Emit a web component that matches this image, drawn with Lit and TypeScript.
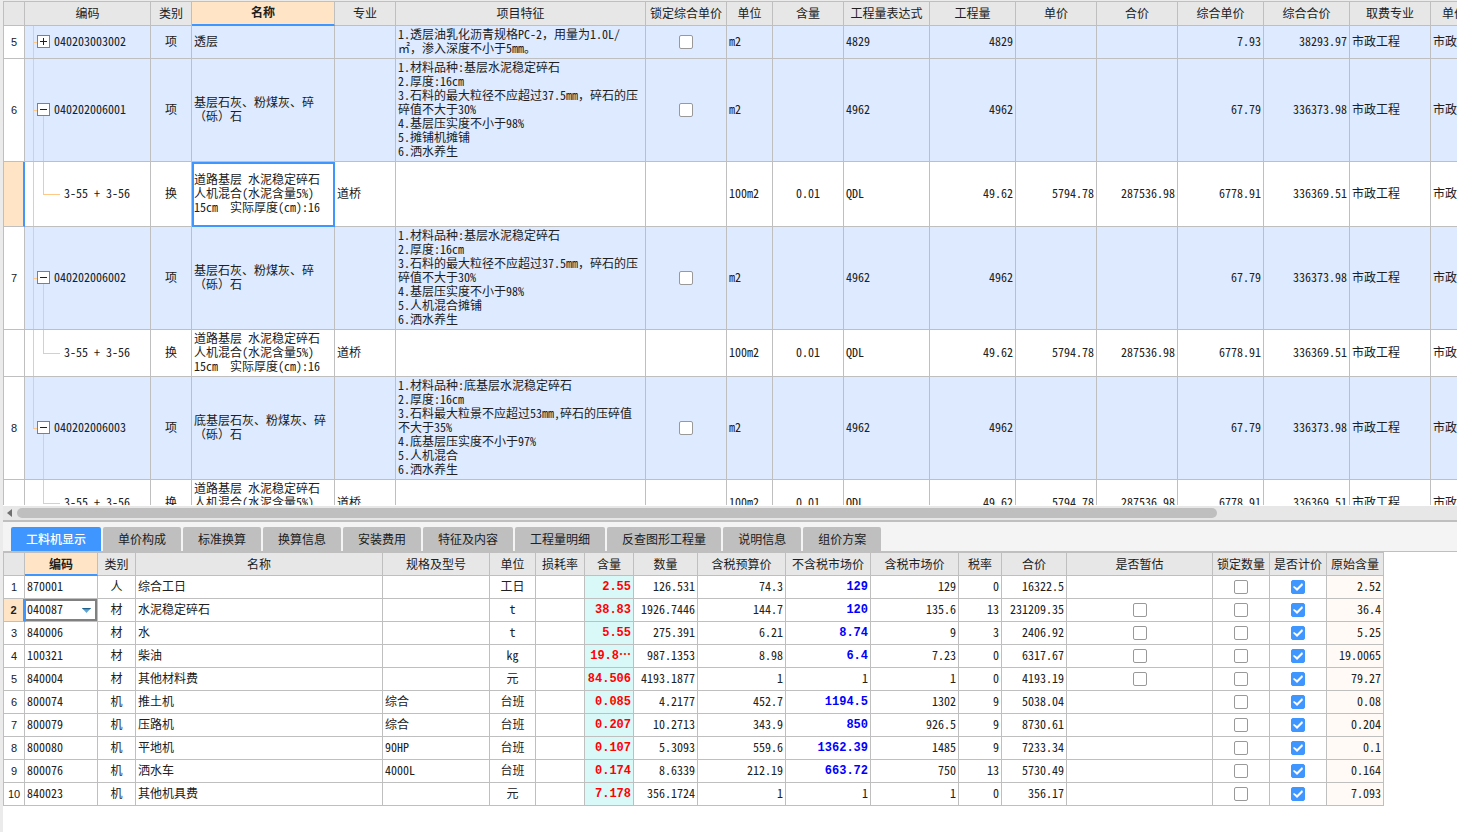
import { LitElement, html, css, nothing } from "lit";
import { customElement, state } from "lit/decorators.js";
import { classMap } from "lit/directives/class-map.js";

interface Column {
  title: string;
  width: number;
  align?: "left" | "right" | "center";
  tone?: "amount" | "price" | "origin";
}

interface BillRow {
  no: string;
  code: string;
  tree: string;
  kind: string;
  name: string;
  trade?: string;
  feature?: string;
  unit: string;
  content?: string;
  expr: string;
  qty: string;
  price?: string;
  total?: string;
  unitAll: string;
  totalAll: string;
  height: number;
}

const BILL_COLUMNS: Column[] = [
  { title: "", width: 21 },
  { title: "编码", width: 126 },
  { title: "类别", width: 41 },
  { title: "名称", width: 143 },
  { title: "专业", width: 61 },
  { title: "项目特征", width: 250 },
  { title: "锁定综合单价", width: 81 },
  { title: "单位", width: 46 },
  { title: "含量", width: 71 },
  { title: "工程量表达式", width: 86 },
  { title: "工程量", width: 86 },
  { title: "单价", width: 81 },
  { title: "合价", width: 81 },
  { title: "综合单价", width: 86 },
  { title: "综合合价", width: 86 },
  { title: "取费专业", width: 81 },
  { title: "单价构成", width: 71 },
];

const quota = (tree: string, height: number): BillRow => ({
  no: "",
  code: "3-55 + 3-56",
  tree,
  kind: "换",
  name: "道路基层 水泥稳定碎石\n人机混合(水泥含量5%)\n15cm  实际厚度(cm):16",
  trade: "道桥",
  unit: "100m2",
  content: "0.01",
  expr: "QDL",
  qty: "49.62",
  price: "5794.78",
  total: "287536.98",
  unitAll: "6778.91",
  totalAll: "336369.51",
  height,
});

const item = (no: string, code: string, tree: string, name: string, feature: string): BillRow => ({
  no,
  code,
  tree,
  kind: "项",
  name,
  feature,
  unit: "m2",
  expr: "4962",
  qty: "4962",
  unitAll: "67.79",
  totalAll: "336373.98",
  height: 103,
});

const BILL_ROWS: BillRow[] = [
  {
    ...item("5", "040203003002", "closed", "透层", "1.透层油乳化沥青规格PC-2，用量为1.0L/\n㎡，渗入深度不小于5mm。"),
    expr: "4829",
    qty: "4829",
    unitAll: "7.93",
    totalAll: "38293.97",
    height: 33,
  },
  item("6", "040202006001", "open", "基层石灰、粉煤灰、碎\n（砾）石",
    "1.材料品种:基层水泥稳定碎石\n2.厚度:16cm\n3.石料的最大粒径不应超过37.5mm，碎石的压\n碎值不大于30%\n4.基层压实度不小于98%\n5.摊铺机摊铺\n6.洒水养生"),
  quota("child", 65),
  item("7", "040202006002", "open", "基层石灰、粉煤灰、碎\n（砾）石",
    "1.材料品种:基层水泥稳定碎石\n2.厚度:16cm\n3.石料的最大粒径不应超过37.5mm，碎石的压\n碎值不大于30%\n4.基层压实度不小于98%\n5.人机混合摊铺\n6.洒水养生"),
  quota("child", 47),
  item("8", "040202006003", "last", "底基层石灰、粉煤灰、碎\n（砾）石",
    "1.材料品种:底基层水泥稳定碎石\n2.厚度:16cm\n3.石料最大粒景不应超过53mm,碎石的压碎值\n不大于35%\n4.底基层压实度不小于97%\n5.人机混合\n6.洒水养生"),
  quota("tail", 47),
];

const TABS = ["工料机显示", "单价构成", "标准换算", "换算信息", "安装费用", "特征及内容", "工程量明细", "反查图形工程量", "说明信息", "组价方案"];

const RES_COLUMNS: Column[] = [
  { title: "", width: 21, align: "center" },
  { title: "编码", width: 73 },
  { title: "类别", width: 38, align: "center" },
  { title: "名称", width: 247 },
  { title: "规格及型号", width: 107 },
  { title: "单位", width: 46, align: "center" },
  { title: "损耗率", width: 49 },
  { title: "含量", width: 49, align: "right", tone: "amount" },
  { title: "数量", width: 64, align: "right" },
  { title: "含税预算价", width: 88, align: "right" },
  { title: "不含税市场价", width: 85, align: "right", tone: "price" },
  { title: "含税市场价", width: 88, align: "right" },
  { title: "税率", width: 43, align: "right" },
  { title: "合价", width: 65, align: "right" },
  { title: "是否暂估", width: 146, align: "center" },
  { title: "锁定数量", width: 57, align: "center" },
  { title: "是否计价", width: 57, align: "center" },
  { title: "原始含量", width: 57, align: "right", tone: "origin" },
];

// 编码, 类别, 名称, 规格, 单位, 损耗率, 含量, 数量, 含税预算价, 不含税市场价, 含税市场价, 税率, 合价, 原始含量
const RES_ROWS: string[][] = [
  ["870001", "人", "综合工日", "", "工日", "", "2.55", "126.531", "74.3", "129", "129", "0", "16322.5", "2.52"],
  ["040087", "材", "水泥稳定碎石", "", "t", "", "38.83", "1926.7446", "144.7", "120", "135.6", "13", "231209.35", "36.4"],
  ["840006", "材", "水", "", "t", "", "5.55", "275.391", "6.21", "8.74", "9", "3", "2406.92", "5.25"],
  ["100321", "材", "柴油", "", "kg", "", "19.8⋯", "987.1353", "8.98", "6.4", "7.23", "0", "6317.67", "19.0065"],
  ["840004", "材", "其他材料费", "", "元", "", "84.506", "4193.1877", "1", "1", "1", "0", "4193.19", "79.27"],
  ["800074", "机", "推土机", "综合", "台班", "", "0.085", "4.2177", "452.7", "1194.5", "1302", "9", "5038.04", "0.08"],
  ["800079", "机", "压路机", "综合", "台班", "", "0.207", "10.2713", "343.9", "850", "926.5", "9", "8730.61", "0.204"],
  ["800080", "机", "平地机", "90HP", "台班", "", "0.107", "5.3093", "559.6", "1362.39", "1485", "9", "7233.34", "0.1"],
  ["800076", "机", "洒水车", "4000L", "台班", "", "0.174", "8.6339", "212.19", "663.72", "750", "13", "5730.49", "0.164"],
  ["840023", "机", "其他机具费", "", "元", "", "7.178", "356.1724", "1", "1", "1", "0", "356.17", "7.093"],
];

@customElement("app-root")
export class AppRoot extends LitElement {
  @state() private tab = 0;

  static styles = css`
    :host {
      display: flex;
      flex-direction: column;
      height: 100vh;
      box-sizing: border-box;
      padding-left: 3px;
      overflow: hidden;
      background: #ebebeb;
      color: #202020;
      font-family: "Noto Sans Mono CJK SC", "Noto Sans CJK SC", sans-serif;
      font-size: 12px;
      line-height: 14px;
    }
    .upper {
      flex: 1;
      min-height: 0;
      display: flex;
      flex-direction: column;
      padding-top: 1px;
      box-sizing: border-box;
    }
    .sheet {
      flex: 1;
      min-height: 0;
      overflow: hidden;
      background: #fff;
    }
    table {
      table-layout: fixed;
      width: 0;
      border-collapse: separate;
      border-spacing: 0;
      border-top: 1px solid #bfbfbf;
      border-left: 1px solid #bfbfbf;
    }
    th, td {
      box-sizing: border-box;
      border-right: 1px solid #bfbfbf;
      border-bottom: 1px solid #bfbfbf;
      white-space: pre;
      overflow: hidden;
      vertical-align: middle;
    }
    td { padding: 0 2px 2px; }
    th {
      padding: 0;
      font-weight: 400;
      background: #e7e7e7;
      text-align: center;
    }
    thead tr { height: 24px; }
    .bill thead th { padding-bottom: 2px; }
    .resources thead tr, .resources tbody tr { height: 23px; }
    th.active {
      background: #ffe5c6;
      border-bottom: 2px solid #4096ff;
      font-weight: 700;
    }
    tbody th {
      background: #fff;
      font-family: "Liberation Sans", sans-serif;
      font-size: 11px;
    }
    tbody th.current {
      background: #ffe5c6;
      border-right: 2px solid #4096ff;
      font-weight: 700;
    }
    .left { text-align: left; }
    .right { text-align: right; }
    .center { text-align: center; }
    .item td { background-color: #ddeaff; }
    td.picked { outline: 2px solid #4096ff; outline-offset: -2px; }

    .tree {
      --line: linear-gradient(#ffc887, #ffc887);
      background-repeat: no-repeat;
    }
    .tree.closed {
      background-image: var(--line), var(--line);
      background-position: 8px 0, 8px 50%;
      background-size: 1px 100%, 4px 1px;
    }
    .tree.open {
      background-image: var(--line), var(--line), var(--line);
      background-position: 8px 0, 8px 50%, 18px 100%;
      background-size: 1px 100%, 4px 1px, 1px 50%;
    }
    .tree.last {
      background-image: var(--line), var(--line), var(--line);
      background-position: 8px 0, 8px 50%, 18px 100%;
      background-size: 1px 50%, 4px 1px, 1px 50%;
    }
    .tree.child {
      background-image: var(--line), var(--line), var(--line);
      background-position: 8px 0, 18px 0, 18px 50%;
      background-size: 1px 100%, 1px 50%, 17px 1px;
    }
    .tree.tail {
      background-image: var(--line), var(--line);
      background-position: 18px 0, 18px 50%;
      background-size: 1px 50%, 17px 1px;
    }
    .node { display: flex; align-items: center; gap: 4px; padding-left: 10px; }
    .leaf { padding-left: 37px; }
    .toggle {
      width: 13px;
      height: 13px;
      padding: 0;
      border: 1px solid #808080;
      border-radius: 0;
      background: #fff;
      display: flex;
    }
    .toggle svg { display: block; width: 11px; height: 11px; }

    td.tick { padding-bottom: 0; }
    .check {
      appearance: none;
      display: block;
      width: 14px;
      height: 14px;
      margin: 0 auto;
      border: 1px solid #999;
      border-radius: 2px;
      background: #fff;
      box-sizing: border-box;
    }
    .check:checked { border-color: #4096ff; background: #4096ff; }
    .check:checked::after {
      content: "";
      display: block;
      width: 12px;
      height: 12px;
      background: #fff;
      clip-path: polygon(1px 6px, 2px 5px, 5px 7px, 10px 2px, 11px 4px, 5px 10px);
    }

    .scroll {
      display: flex;
      align-items: center;
      height: 14px;
      flex: none;
      background: #e7e7e7;
      border-top: 1px solid #fff;
    }
    .scroll button {
      width: 14px;
      height: 14px;
      padding: 0 0 0 4px;
      border: 0;
      background: none;
      display: flex;
      align-items: center;
    }
    .scroll svg { width: 5px; height: 8px; fill: #707070; }
    .thumb { flex: 5; height: 10px; border-radius: 5px; background: #bfbfbf; }
    .rest { flex: 1; }

    .lower {
      flex: 0 0 37.5%;
      min-height: 0;
      overflow: hidden;
      background: #fff;
      border-top: 2px solid #bfbfbf;
      box-sizing: border-box;
    }
    .tabs {
      display: flex;
      gap: 2px;
      padding: 5px 8px 0;
      background: #f4f4f4;
      border-bottom: 1px solid #bfbfbf;
    }
    .tab {
      height: 24px;
      padding: 0 15px;
      border: 0;
      border-radius: 2px 2px 0 0;
      background: #bfbfbf;
      color: #202020;
      font: 12px/24px "Noto Sans CJK SC", sans-serif;
      white-space: nowrap;
    }
    .tab.on { background: #4096ff; color: #fff; font-weight: 500; }
    td.amount { background: #d9f8f8; color: #f00; }
    td.price.bold { color: #00f; }
    td.bold { padding-bottom: 0; font-family: "Liberation Mono", "Noto Sans CJK SC", monospace; font-weight: 700; }
    td.origin { background: #fffaf5; }
    td.editing { padding: 0; border-left: 1px solid #4096ff; }
    .combo {
      display: grid;
      grid-template-columns: 1fr 13px;
      align-items: center;
      height: 22px;
      box-sizing: border-box;
      border: 2px solid #808080;
      border-left: 0;
    }
    .combo select {
      grid-area: 1 / 1 / 2 / 3;
      appearance: none;
      border: 0;
      padding: 0 1px 2px;
      height: 18px;
      background: none;
      color: inherit;
      font: inherit;
      outline: none;
    }
    .combo svg { grid-area: 1 / 2; width: 9px; height: 5px; pointer-events: none; }
  `;

  private cols(list: Column[]) {
    return html`<colgroup>${list.map((c) => html`<col style="width:${c.width}px" />`)}</colgroup>`;
  }

  private head(list: Column[], active: number) {
    return html`<thead><tr>
      ${list.map((c, i) => html`<th scope="col" class=${classMap({ active: i === active })}>${c.title}</th>`)}
    </tr></thead>`;
  }

  private check(label: string, on = false) {
    return html`<input class="check" type="checkbox" aria-label=${label} .checked=${on} />`;
  }

  private code(r: BillRow) {
    if (!r.no) return html`<div class="leaf">${r.code}</div>`;
    const closed = r.tree === "closed";
    return html`<div class="node"><button class="toggle" aria-label=${closed ? "展开" : "折叠"}><svg viewBox="0 0 11 11" stroke="#202020" shape-rendering="crispEdges"><path d=${closed ? "M2 5.5H9M5.5 2V9" : "M2 5.5H9"} /></svg></button><span>${r.code}</span></div>`;
  }

  private billRow(r: BillRow, i: number) {
    const cur = i === 2;
    return html`<tr class=${r.no ? "item" : "quota"} style="height:${r.height}px">
      <th scope="row" class=${cur ? "current" : ""}>${r.no}</th>
      <td class="tree ${r.tree}">${this.code(r)}</td>
      <td class="center">${r.kind}</td>
      <td class=${cur ? "picked" : ""}>${r.name}</td>
      <td>${r.trade}</td>
      <td>${r.feature}</td>
      <td class="tick">${r.no ? this.check("锁定综合单价 " + r.code) : nothing}</td>
      <td>${r.unit}</td>
      <td class="center">${r.content}</td>
      <td>${r.expr}</td>
      <td class="right">${r.qty}</td>
      <td class="right">${r.price}</td>
      <td class="right">${r.total}</td>
      <td class="right">${r.unitAll}</td>
      <td class="right">${r.totalAll}</td>
      <td>市政工程</td>
      <td>市政工程</td>
    </tr>`;
  }

  private resCell(row: string[], r: number, c: Column, i: number) {
    if (i === 0) return html`<th scope="row" class=${r === 1 ? "current" : ""}>${r + 1}</th>`;
    if (i === 1 && r === 1)
      return html`<td class="editing"><div class="combo"><select aria-label="编码"><option>${row[0]}</option></select><svg viewBox="0 0 9 5"><path d="M0 0H9L4.500 5Z" fill="#5fa3d3" /><path d="M0 0H9L8 1.200H1Z" fill="#1f5f8c" /></svg></div></td>`;
    if (i === 14) return html`<td class="tick">${r > 0 && r < 5 ? this.check("是否暂估 " + row[2]) : nothing}</td>`;
    if (i === 15) return html`<td class="tick">${this.check("锁定数量 " + row[2])}</td>`;
    if (i === 16) return html`<td class="tick">${this.check("是否计价 " + row[2], true)}</td>`;
    const text = i === 17 ? row[13] : row[i - 1];
    const bold = c.tone === "amount" || (c.tone === "price" && text !== "1");
    return html`<td class="${c.align ?? "left"} ${c.tone ?? ""} ${bold ? "bold" : ""}">${text}</td>`;
  }

  render() {
    return html`
      <section class="upper">
        <div class="sheet">
          <table class="bill">
            ${this.cols(BILL_COLUMNS)} ${this.head(BILL_COLUMNS, 3)}
            <tbody>${BILL_ROWS.map((r, i) => this.billRow(r, i))}</tbody>
          </table>
        </div>
        <div class="scroll">
          <button aria-label="向左滚动"><svg viewBox="0 0 5 8"><path d="M5 0V8L0 4Z" /></svg></button>
          <div class="thumb"></div>
          <div class="rest"></div>
        </div>
      </section>
      <section class="lower">
        <div class="tabs" role="tablist">
          ${TABS.map((t, i) => html`<button role="tab" aria-selected=${i === this.tab} class=${classMap({ tab: true, on: i === this.tab })} @click=${() => (this.tab = i)}>${t}</button>`)}
        </div>
        <table class="resources">
          ${this.cols(RES_COLUMNS)} ${this.head(RES_COLUMNS, 1)}
          <tbody>${RES_ROWS.map((row, r) => html`<tr>${RES_COLUMNS.map((c, i) => this.resCell(row, r, c, i))}</tr>`)}</tbody>
        </table>
      </section>
    `;
  }
}
